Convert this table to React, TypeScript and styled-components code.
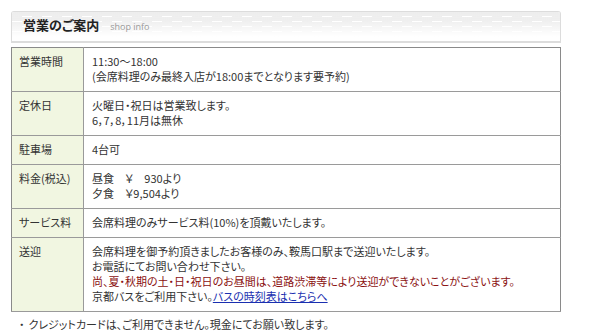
import styled, { createGlobalStyle } from "styled-components";

const GlobalStyle = createGlobalStyle`
  html, body {
    margin: 0;
    padding: 0;
    background: #fff;
  }
  body {
    font-family: "Noto Sans CJK JP", "Liberation Sans", sans-serif;
    font-size: 11px;
    color: #333;
    font-feature-settings: "palt";
  }
`;

const Wrapper = styled.div`
  width: 550px;
  padding: 11px 0 0 11px;
`;

const Heading = styled.div`
  position: relative;
  height: 29px;
  border: 1px solid #dcdcdc;
  border-bottom: 2px solid #dcdcdc;
  border-radius: 3px 3px 0 0;
  overflow: hidden;
  display: flex;
  align-items: flex-end;
  box-shadow: inset 0 -2px 0 #5a9a12;
`;

const Weave = styled.svg`
  position: absolute;
  inset: 0;
  width: 100%;
  height: 100%;
`;

const Title = styled.h2`
  position: relative;
  margin: 0 0 6px 11px;
  font-size: 13px;
  font-weight: bold;
  color: #222;
  line-height: 16px;
`;

const Sub = styled.span`
  margin-left: 11px;
  font-family: "Open Sans", "Liberation Sans", sans-serif;
  font-size: 9px;
  font-weight: normal;
  color: #999;
`;

const Table = styled.table`
  width: 100%;
  margin-top: 4px;
  border-collapse: collapse;
  border: 1px solid #8a8a8a;
`;

const Row = styled.tr`
  border-bottom: 1px solid #9a9a9a;
`;

const Label = styled.th`
  width: 57px;
  padding: 6px 7px 7px 7px;
  background: #f1f6e1;
  border-right: 1px solid #9a9a9a;
  font-weight: normal;
  text-align: left;
  vertical-align: top;
  line-height: 15px;
  white-space: nowrap;
`;

const Value = styled.td`
  padding: 6px 8px 7px 8px;
  line-height: 15px;
  vertical-align: top;
`;

const Line = styled.div<{ $tone?: "alert" }>`
  color: ${(p) => (p.$tone === "alert" ? "#8a1010" : "inherit")};
`;

const Link = styled.a`
  color: #1a2fb0;
  text-decoration: underline;
`;

const Notes = styled.ul`
  margin: 5px 0 0;
  padding: 0 0 0 8px;
  list-style: none;
  line-height: 15px;
`;

const Note = styled.li`
  &::before {
    content: "・";
    margin-right: 4px;
  }
`;

const rows: { label: string; lines: React.ReactNode[] }[] = [
  {
    label: "営業時間",
    lines: ["11:30～18:00", "(会席料理のみ最終入店が18:00までとなります要予約)"],
  },
  {
    label: "定休日",
    lines: ["火曜日・祝日は営業致します。", "6，7，8，11月は無休"],
  },
  { label: "駐車場", lines: ["4台可"] },
  {
    label: "料金(税込)",
    lines: ["昼食　￥　930より", "夕食　￥9,504より"],
  },
  { label: "サービス料", lines: ["会席料理のみサービス料(10%)を頂戴いたします。"] },
  {
    label: "送迎",
    lines: [
      "会席料理を御予約頂きましたお客様のみ、鞍馬口駅まで送迎いたします。",
      "お電話にてお問い合わせ下さい。",
      <Line key="a" $tone="alert">
        尚、夏・秋期の土・日・祝日のお昼間は、道路渋滞等により送迎ができないことがございます。
      </Line>,
      <span key="b">
        京都バスをご利用下さい。<Link href="#">バスの時刻表はこちらへ</Link>
      </span>,
    ],
  },
];

export default function App() {
  return (
    <>
      <GlobalStyle />
      <Wrapper>
        <Heading>
          <Weave aria-hidden="true">
            <defs>
              <pattern id="weave" width="20" height="10" patternUnits="userSpaceOnUse">
                <path d="M1 0v5M3 0v5M5 0v5M7 0v5M9 0v5" stroke="#dcdcdc" strokeWidth="1" />
                <path d="M10 1h10M10 3h10" stroke="#dcdcdc" strokeWidth="1" />
                <path d="M0 6h10M0 8h10" stroke="#dcdcdc" strokeWidth="1" />
                <path d="M11 5v5M13 5v5M15 5v5M17 5v5M19 5v5" stroke="#dcdcdc" strokeWidth="1" />
              </pattern>
              <linearGradient id="fade" x1="0" y1="0" x2="0" y2="1">
                <stop offset="0" stopColor="#fff" stopOpacity="0" />
                <stop offset="0.3" stopColor="#fff" stopOpacity="0.1" />
                <stop offset="0.85" stopColor="#fff" stopOpacity="1" />
              </linearGradient>
            </defs>
            <rect width="100%" height="100%" fill="#fff" />
            <rect width="100%" height="100%" fill="url(#weave)" />
            <rect width="100%" height="100%" fill="url(#fade)" />
          </Weave>
          <Title>
            営業のご案内<Sub>shop info</Sub>
          </Title>
        </Heading>
        <Table>
          <tbody>
            {rows.map((r) => (
              <Row key={r.label}>
                <Label>{r.label}</Label>
                <Value>
                  {r.lines.map((l, i) =>
                    typeof l === "string" ? <Line key={i}>{l}</Line> : l
                  )}
                </Value>
              </Row>
            ))}
          </tbody>
        </Table>
        <Notes>
          <Note>クレジットカードは、ご利用できません。現金にてお願い致します。</Note>
        </Notes>
      </Wrapper>
    </>
  );
}
